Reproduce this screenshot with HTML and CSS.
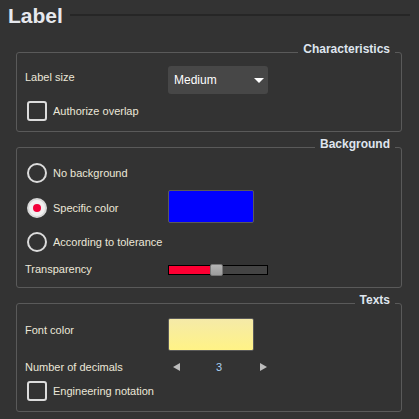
FILE: index.html
```html
<!DOCTYPE html>
<html>
<head>
<meta charset="utf-8">
<link rel="stylesheet" href="styles.css">
</head>
<body>
<div class="page">
  <div class="title-row">
    <h1 class="title">Label</h1>
    <div class="title-line"></div>
  </div>

  <section class="group g1">
    <span class="group-title">Characteristics</span>
    <div class="row r-select">
      <span class="label top">Label size</span>
      <div class="select"><span>Medium</span><span class="caret"></span></div>
    </div>
    <div class="row r-check">
      <span class="check"></span><span class="opt">Authorize overlap</span>
    </div>
  </section>

  <section class="group g2">
    <span class="group-title">Background</span>
    <div class="row r-radio">
      <span class="radio"></span><span class="opt">No background</span>
    </div>
    <div class="row r-swatch">
      <div class="radio-wrap"><span class="radio on"></span><span class="opt">Specific color</span></div>
      <div class="swatch blue"></div>
    </div>
    <div class="row r-radio r3">
      <span class="radio"></span><span class="opt">According to tolerance</span>
    </div>
    <div class="row r-slider">
      <span class="label">Transparency</span>
      <div class="slider"><div class="fill"></div><div class="thumb"></div></div>
    </div>
  </section>

  <section class="group g3">
    <span class="group-title">Texts</span>
    <div class="row r-swatch2">
      <span class="label top top2">Font color</span>
      <div class="swatch yellow"></div>
    </div>
    <div class="row r-spin">
      <span class="label">Number of decimals</span>
      <div class="spin"><span class="arr left"></span><span class="val">3</span><span class="arr right"></span></div>
    </div>
    <div class="row r-check r-eng">
      <span class="check"></span><span class="opt">Engineering notation</span>
    </div>
  </section>
</div>
</body>
</html>
```

FILE: styles.css
```css
html, body {
  margin: 0;
  padding: 0;
  background: #333333;
}
body {
  width: 419px;
  height: 419px;
  overflow: hidden;
  font-family: "Liberation Sans", Arial, sans-serif;
  font-size: 11px;
  color: #ebe7d8;
}
.page {
  padding: 4px 9px 0 8px;
}
.title-row {
  display: flex;
  align-items: center;
  height: 24px;
}
.title {
  margin: 0;
  font-size: 21px;
  line-height: 24px;
  font-weight: bold;
  color: #e6e8ee;
}
.title-line {
  flex: 1;
  height: 2px;
  margin-left: 7px;
  margin-top: -2px;
  background: #262626;
}
.group {
  position: relative;
  margin-left: 8px;
  margin-right: 8px;
  border: 1px solid #5a5a5a;
  border-radius: 3px;
  padding-left: 8px;
  box-sizing: border-box;
}
.g1 { margin-top: 24px; padding-top: 13px; padding-bottom: 10px; }
.g2 { margin-top: 15px; padding-top: 15px; padding-bottom: 9px; }
.g3 { margin-top: 15px; padding-top: 14px; padding-bottom: 10px; }
.group-title {
  position: absolute;
  right: 6px;
  top: -11px;
  padding: 0 5px;
  background: #333333;
  font-size: 12px;
  line-height: 14px;
  font-weight: bold;
  color: #dfe5ee;
}
.row {
  display: flex;
  align-items: center;
}
.label {
  width: 143px;
  flex: none;
}
.label.top {
  align-self: flex-start;
  line-height: 13px;
  padding-top: 5px;
}
.label.top2 {
  padding-top: 6px;
}
.opt {
  margin-left: 6px;
}
.r-select { height: 28px; }
.r-check { height: 20px; margin-top: 7px; padding-left: 2px; }
.r-eng { margin-top: 5px; }
.select {
  width: 100px;
  height: 28px;
  background: #474747;
  border-radius: 3px;
  display: flex;
  align-items: center;
  justify-content: space-between;
  padding: 0 4px 0 6px;
  box-sizing: border-box;
  font-size: 12px;
  color: #ffffff;
}
.caret {
  width: 0;
  height: 0;
  border-left: 5px solid transparent;
  border-right: 5px solid transparent;
  border-top: 5px solid #ffffff;
  margin-top: 1px;
}
.check {
  width: 20px;
  height: 20px;
  box-sizing: border-box;
  border: 2px solid #dcdcdc;
  border-radius: 3px;
  flex: none;
}
.radio {
  width: 20px;
  height: 20px;
  box-sizing: border-box;
  border: 2px solid #dcdcdc;
  border-radius: 50%;
  flex: none;
  display: flex;
  align-items: center;
  justify-content: center;
}
.radio.on {
  background: #f0f0f0;
  border-color: #d8d8d8;
}
.radio.on::after {
  content: "";
  width: 8px;
  height: 8px;
  border-radius: 50%;
  background: #f2003a;
}
.r-radio { height: 20px; padding-left: 2px; }
.r3 { margin-top: 9px; }
.r-swatch { height: 33px; margin-top: 7px; }
.radio-wrap {
  width: 143px;
  flex: none;
  display: flex;
  align-items: center;
  padding-left: 2px;
  box-sizing: border-box;
  margin-top: 3px;
}
.swatch {
  width: 86px;
  height: 33px;
  box-sizing: border-box;
  border: 1px solid #5a5a5a;
  border-radius: 2px;
}
.blue { background: #0000ff; }
.yellow { background: linear-gradient(#f5eaa8, #fff386); }
.r-slider { height: 18px; margin-top: 8px; }
.slider {
  position: relative;
  width: 100px;
  height: 10px;
  box-sizing: border-box;
  border: 1px solid #000000;
  background: #444444;
  margin-top: 1px;
}
.fill {
  width: 42px;
  height: 100%;
  background: #ff0033;
}
.thumb {
  position: absolute;
  left: 41px;
  top: -2px;
  width: 13px;
  height: 12px;
  box-sizing: border-box;
  border: 1px solid #777777;
  border-radius: 2px;
  background: linear-gradient(#b4b4b4, #9c9c9c);
}
.r-swatch2 { height: 33px; }
.r-spin { height: 18px; margin-top: 7px; }
.spin {
  display: flex;
  align-items: center;
  width: 97px;
  padding-left: 5px;
}
.arr {
  width: 0;
  height: 0;
  border-top: 4px solid transparent;
  border-bottom: 4px solid transparent;
}
.arr.left { border-right: 7px solid #bdbdbd; }
.arr.right { border-left: 7px solid #bdbdbd; }
.val {
  width: 78px;
  text-align: center;
  color: #a9cff2;
  padding-right: 2px;
}
```
